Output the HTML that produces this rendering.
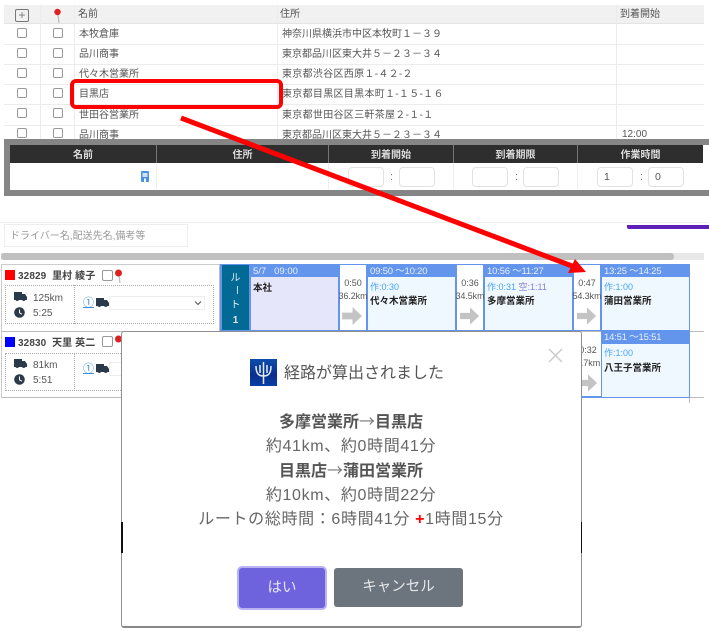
<!DOCTYPE html>
<html lang="ja"><head><meta charset="utf-8">
<style>
html,body{margin:0;padding:0;background:#fff}
#p{position:relative;width:709px;height:631px;overflow:hidden;background:#fff;font-family:"Liberation Sans","Noto Sans CJK JP",sans-serif;color:#555;filter:blur(.35px)}
#p div{position:absolute;box-sizing:border-box}
.t{font-size:10px;line-height:14px;white-space:nowrap;color:#555}
.cb{width:10px;height:10px;border:1px solid #999;border-radius:2px;background:#fff}
.th{font-size:10px;font-weight:bold;color:#ddd;text-align:center;line-height:18px;top:147px;height:18px;white-space:nowrap}
.inp{width:36px;height:20px;top:167px;border:1px solid #e2e2e2;border-radius:4px;background:#fff;font-size:10.5px;line-height:18px;padding-left:6px;color:#555}
.col{top:167px;font-size:11px;color:#777;line-height:20px}
.sh{color:#e8f0ff;font-size:9.5px;line-height:14px;padding-left:3px;white-space:nowrap;letter-spacing:-.2px}
.sb{background:#f0f8ff}
.wk{font-size:9px;color:#4aa3f5;line-height:12px;white-space:nowrap}
.nm{font-size:9.5px;font-weight:bold;color:#222;line-height:12px;white-space:nowrap}
.mv{background:#fff;font-size:9px;color:#555;text-align:center;line-height:13px;white-space:nowrap;padding-top:12px}
.km{font-size:8.8px;margin-left:-5px;margin-right:-5px}
.mt{font-size:16px;line-height:24px;text-align:center;left:122px;width:458px;color:#666;white-space:nowrap;letter-spacing:.65px}
.mb{font-weight:bold;color:#555;letter-spacing:0}
.ar{font-family:"Noto Sans CJK JP",sans-serif;font-weight:normal;color:#777}
.rt{left:222px;width:27px;text-align:center;color:#dfeaf0;font-size:10px;line-height:14px}
</style></head><body>
<div id="p">
<!-- table -->
<div style="left:4px;top:5px;width:700px;height:18px;background:#f1f1f1"></div>
<div style="left:4px;top:23px;width:700px;height:1px;background:#e4e4e4"></div>
<div style="left:4px;top:44px;width:700px;height:1px;background:#ececec"></div>
<div style="left:4px;top:64px;width:700px;height:1px;background:#ececec"></div>
<div style="left:4px;top:84px;width:700px;height:1px;background:#ececec"></div>
<div style="left:4px;top:104px;width:700px;height:1px;background:#ececec"></div>
<div style="left:4px;top:125px;width:700px;height:1px;background:#ececec"></div>
<div style="left:40px;top:5px;width:1px;height:135px;background:#ececec"></div>
<div style="left:74px;top:5px;width:1px;height:135px;background:#ececec"></div>
<div style="left:277px;top:5px;width:1px;height:135px;background:#ececec"></div>
<div style="left:616px;top:5px;width:1px;height:135px;background:#ececec"></div>
<div style="left:15px;top:9px;width:14px;height:13px;border:1px solid #777;border-radius:2px;color:#777;font-size:12px;line-height:10px;text-align:center">+</div>
<svg style="position:absolute;left:53px;top:8px" width="10" height="16" viewBox="0 0 10 16"><path d="M5 7L6 15" stroke="#bbb" stroke-width="1.2"/><circle cx="4.5" cy="4" r="3.2" fill="#e02020"/></svg>
<div class="t" style="left:78px;top:8px">名前</div>
<div class="t" style="left:280px;top:8px">住所</div>
<div class="t" style="left:620px;top:8px">到着開始</div>

<div class="cb" style="left:17px;top:28px"></div><div class="cb" style="left:53px;top:28px"></div>
<div class="t" style="left:79px;top:28px">本牧倉庫</div>
<div class="t" style="left:282px;top:28px">神奈川県横浜市中区本牧町１－３９</div>
<div class="cb" style="left:17px;top:48px"></div><div class="cb" style="left:53px;top:48px"></div>
<div class="t" style="left:79px;top:48px">品川商事</div>
<div class="t" style="left:282px;top:48px">東京都品川区東大井５－２３－３４</div>
<div class="cb" style="left:17px;top:68px"></div><div class="cb" style="left:53px;top:68px"></div>
<div class="t" style="left:79px;top:68px">代々木営業所</div>
<div class="t" style="left:282px;top:68px;letter-spacing:.3px">東京都渋谷区西原１-４２-２</div>
<div class="cb" style="left:17px;top:88px"></div><div class="cb" style="left:53px;top:88px"></div>
<div class="t" style="left:79px;top:88px">目黒店</div>
<div class="t" style="left:282px;top:88px;letter-spacing:.3px">東京都目黒区目黒本町１-１５-１６</div>
<div class="cb" style="left:17px;top:108px"></div><div class="cb" style="left:53px;top:108px"></div>
<div class="t" style="left:79px;top:109px">世田谷営業所</div>
<div class="t" style="left:282px;top:109px;letter-spacing:.3px">東京都世田谷区三軒茶屋２-１-１</div>
<div class="cb" style="left:17px;top:128px"></div><div class="cb" style="left:53px;top:128px"></div>
<div class="t" style="left:79px;top:129px">品川商事</div>
<div class="t" style="left:282px;top:129px">東京都品川区東大井５－２３－３４</div>
<div class="t" style="left:622px;top:128px">12:00</div>

<!-- dark panel -->
<div style="left:4px;top:138.500px;width:705px;height:57px;background:#858585"></div>
<div style="left:10px;top:144.500px;width:693px;height:45px;background:#fff"></div>
<div style="left:703px;top:144.500px;width:6px;height:45px;background:#fff"></div>
<div style="left:10px;top:145px;width:693px;height:18px;background:#2e2e2e"></div>
<div style="left:156px;top:145px;width:1px;height:18px;background:#777"></div>
<div style="left:328px;top:145px;width:1px;height:18px;background:#777"></div>
<div style="left:453px;top:145px;width:1px;height:18px;background:#777"></div>
<div style="left:577px;top:145px;width:1px;height:18px;background:#777"></div>
<div class="th" style="left:10px;width:146px">名前</div>
<div class="th" style="left:157px;width:171px">住所</div>
<div class="th" style="left:329px;width:124px">到着開始</div>
<div class="th" style="left:454px;width:123px">到着期限</div>
<div class="th" style="left:578px;width:125px">作業時間</div>
<div style="left:156px;top:164px;width:1px;height:25px;background:#eee"></div>
<div style="left:328px;top:164px;width:1px;height:25px;background:#eee"></div>
<div style="left:453px;top:164px;width:1px;height:25px;background:#eee"></div>
<div style="left:577px;top:164px;width:1px;height:25px;background:#eee"></div>
<svg style="position:absolute;left:141px;top:171px" width="8" height="11" viewBox="0 0 8 11"><rect width="8" height="11" rx="1" fill="#4a90e2"/><rect x="1.500" y="2" width="5" height="4" fill="#cfe2fa"/><rect x="3" y="7.500" width="2" height="3.500" fill="#fff"/></svg>
<div class="inp" style="left:348px"></div><div class="col" style="left:390px">:</div><div class="inp" style="left:399px"></div>
<div class="inp" style="left:472px"></div><div class="col" style="left:515px">:</div><div class="inp" style="left:523px"></div>
<div class="inp" style="left:597px">1</div><div class="col" style="left:640px">:</div><div class="inp" style="left:648px">0</div>

<div style="left:0;top:222px;width:709px;height:1px;background:#eee"></div>
<div style="left:627px;top:225px;width:82px;height:4px;background:#5b21b6;border-radius:0 0 0 2px"></div>
<div style="left:4px;top:224px;width:184px;height:23px;border:1px solid #eee;font-size:10px;line-height:23px;color:#999;padding-left:5px;white-space:nowrap">ドライバー名,配送先名,備考等</div>

<!-- scrollbar -->
<div style="left:1px;top:253px;width:703px;height:7px;background:#e8e8e8"></div>
<div style="left:1px;top:253px;width:673px;height:7px;background:#c0c0c0;border-radius:3px"></div>

<!-- drivers -->
<div style="left:1px;top:264px;width:218px;height:1px;background:#ccc"></div>
<div style="left:1px;top:331px;width:703px;height:1px;background:#bbb"></div>
<div style="left:1px;top:397px;width:703px;height:1px;background:#bbb"></div>
<div style="left:689px;top:397px;width:1px;height:6px;background:#bbb"></div>
<div style="left:1px;top:264px;width:1px;height:134px;background:#ccc"></div>
<div style="left:219px;top:264px;width:1px;height:67px;background:#bbb"></div>

<div style="left:5px;top:270px;width:10px;height:10px;background:#f00"></div>
<div style="left:18px;top:270px;font-size:10px;font-weight:bold;color:#444;line-height:14px;white-space:nowrap;letter-spacing:.1px">32829&nbsp; 里村 綾子</div>
<div class="cb" style="left:102px;top:270px;width:11px;height:11px"></div>
<svg style="position:absolute;left:114px;top:269px" width="10" height="15" viewBox="0 0 10 15"><path d="M5 7L6 14" stroke="#bbb" stroke-width="1.200"/><circle cx="4.500" cy="4" r="3.500" fill="#e02020"/></svg>
<div style="left:5px;top:285px;width:209px;height:39px;border:1px dotted #aaa"></div>
<div style="left:74px;top:285px;width:1px;height:39px;border-left:1px dotted #aaa"></div>
<svg style="position:absolute;left:14px;top:291px" width="13" height="11" viewBox="0 0 13 11"><path d="M0 1h8v2h3l2 3v3h-1.500a2 2 0 0 1-3.500 0h-3a2 2 0 0 1-3.500 0H0z" fill="#2b3a4a"/></svg>
<svg style="position:absolute;left:14px;top:307px" width="11" height="11" viewBox="0 0 11 11"><circle cx="5.500" cy="5.500" r="5.300" fill="#2b3a4a"/><path d="M5.500 2.500V5.800L8 7.200" stroke="#fff" fill="none"/></svg>
<div class="t" style="left:33px;top:292px">125km</div>
<div class="t" style="left:33px;top:307px">5:25</div>
<div style="left:83px;top:296px;font-size:11px;color:#3d8fdc;text-decoration:underline;line-height:14px">①</div>
<svg style="position:absolute;left:96px;top:297px" width="13" height="11" viewBox="0 0 13 11"><path d="M0 1h8v2h3l2 3v3h-1.500a2 2 0 0 1-3.500 0h-3a2 2 0 0 1-3.500 0H0z" fill="#2b3a4a"/></svg>
<div style="left:109px;top:296px;width:96px;height:14px;border:1px solid #eee;background:#fff"></div>
<svg style="position:absolute;left:194px;top:300px" width="8" height="6" viewBox="0 0 8 6"><path d="M1 1.500L4 4.500L7 1.500" stroke="#555" fill="none" stroke-width="1.100"/></svg>

<div style="left:5px;top:337px;width:10px;height:10px;background:#00f"></div>
<div style="left:18px;top:337px;font-size:10px;font-weight:bold;color:#444;line-height:14px;white-space:nowrap;letter-spacing:.1px">32830&nbsp; 天里 英二</div>
<div class="cb" style="left:102px;top:336px;width:11px;height:11px"></div>
<svg style="position:absolute;left:114px;top:335px" width="10" height="15" viewBox="0 0 10 15"><circle cx="4.500" cy="4" r="3.500" fill="#e02020"/></svg>
<div style="left:5px;top:353px;width:120px;height:38px;border:1px dotted #aaa;border-right:0"></div>
<div style="left:74px;top:353px;width:1px;height:38px;border-left:1px dotted #aaa"></div>
<svg style="position:absolute;left:14px;top:358px" width="13" height="11" viewBox="0 0 13 11"><path d="M0 1h8v2h3l2 3v3h-1.500a2 2 0 0 1-3.500 0h-3a2 2 0 0 1-3.500 0H0z" fill="#2b3a4a"/></svg>
<svg style="position:absolute;left:14px;top:374px" width="11" height="11" viewBox="0 0 11 11"><circle cx="5.500" cy="5.500" r="5.300" fill="#2b3a4a"/><path d="M5.500 2.500V5.800L8 7.200" stroke="#fff" fill="none"/></svg>
<div class="t" style="left:33px;top:359px">81km</div>
<div class="t" style="left:33px;top:374px">5:51</div>
<div style="left:83px;top:362px;font-size:11px;color:#3d8fdc;text-decoration:underline;line-height:14px">①</div>
<svg style="position:absolute;left:96px;top:363px" width="13" height="11" viewBox="0 0 13 11"><path d="M0 1h8v2h3l2 3v3h-1.500a2 2 0 0 1-3.500 0h-3a2 2 0 0 1-3.500 0H0z" fill="#2b3a4a"/></svg>
<div style="left:109px;top:362px;width:14px;height:14px;border:1px solid #eee;background:#fff"></div>

<!-- route row 1 -->
<div style="left:220px;top:264px;width:470px;height:67px;background:#6495ed"></div>
<div style="left:222px;top:265px;width:27px;height:65px;background:#036a96"></div>
<div class="rt" style="top:272px">ル</div>
<div class="rt" style="top:283px;writing-mode:vertical-rl;height:14px;line-height:27px">ー</div>
<div class="rt" style="top:299px">ト</div>
<div class="rt" style="top:314px;font-weight:bold">1</div>
<div class="sh" style="left:250px;top:265px;width:89px;height:12px;letter-spacing:0">5/7&nbsp;&nbsp; 09:00</div>
<div style="left:251px;top:277px;width:87px;height:53px;background:#e6e6fa"></div>
<div class="nm" style="left:253px;top:283px">本社</div>

<div class="mv" style="left:340px;top:265px;width:26px;height:65px">0:50<br><span class="km">36.2km</span></div>
<svg style="position:absolute;left:342px;top:307px" width="21" height="18" viewBox="0 0 22 19"><path d="M0 6h11V0l10 9.500L11 19v-6H0z" fill="#c4c4c4"/></svg>

<div class="sh" style="left:367px;top:265px;width:89px;height:12px">09:50 ～10:20</div>
<div class="sb" style="left:368px;top:277px;width:86.500px;height:52.500px"></div>
<div class="wk" style="left:370px;top:281px">作:0:30</div>
<div class="nm" style="left:370px;top:296px">代々木営業所</div>

<div class="mv" style="left:457px;top:265px;width:26px;height:65px">0:36<br><span class="km">34.5km</span></div>
<svg style="position:absolute;left:460px;top:307px" width="20" height="18" viewBox="0 0 22 19"><path d="M0 6h11V0l10 9.500L11 19v-6H0z" fill="#c4c4c4"/></svg>

<div class="sh" style="left:484px;top:265px;width:89px;height:12px">10:56 ～11:27</div>
<div class="sb" style="left:485px;top:277px;width:86.500px;height:52.500px"></div>
<div class="wk" style="left:487px;top:281px">作:0:31 <span style="color:#8a7fd8">空:1:11</span></div>
<div class="nm" style="left:487px;top:296px">多摩営業所</div>

<div class="mv" style="left:574px;top:265px;width:26px;height:65px">0:47<br><span class="km">54.3km</span></div>
<svg style="position:absolute;left:577px;top:307px" width="20" height="18" viewBox="0 0 22 19"><path d="M0 6h11V0l10 9.500L11 19v-6H0z" fill="#c4c4c4"/></svg>

<div class="sh" style="left:601px;top:265px;width:89px;height:12px">13:25 ～14:25</div>
<div class="sb" style="left:602px;top:277px;width:86.500px;height:52.500px"></div>
<div class="wk" style="left:604px;top:281px">作:1:00</div>
<div class="nm" style="left:604px;top:296px">蒲田営業所</div>

<!-- route row 2 right -->
<div style="left:575px;top:396px;width:115px;height:1.500px;background:#6495ed"></div>
<div class="mv" style="left:575px;top:332px;width:26px;height:64px">0:32<br>1.7km</div>
<svg style="position:absolute;left:578px;top:374px" width="20" height="18" viewBox="0 0 22 19"><path d="M0 6h11V0l10 9.500L11 19v-6H0z" fill="#c4c4c4"/></svg>
<div style="left:601px;top:331px;width:89px;height:67px;background:#6495ed"></div>
<div class="sh" style="left:601px;top:331px;width:89px;height:13px">14:51 ～15:51</div>
<div class="sb" style="left:602px;top:344px;width:86.500px;height:52.500px"></div>
<div class="wk" style="left:604px;top:347px">作:1:00</div>
<div class="nm" style="left:604px;top:363px">八王子営業所</div>

<!-- modal -->
<div style="left:121px;top:331px;width:461px;height:297px;background:#fff;border:1.500px solid #8f8f8f;border-bottom:2px solid #888;border-radius:3px"></div>
<div style="left:121px;top:522px;width:1.500px;height:31px;background:#111"></div>
<div style="left:580.500px;top:522px;width:1.500px;height:31px;background:#111"></div>
<svg style="position:absolute;left:250px;top:359px" width="27" height="27" viewBox="0 0 27 27"><defs><linearGradient id="g" x1="0" y1="0" x2="0" y2="1"><stop offset="0" stop-color="#0d4cab"/><stop offset=".6" stop-color="#0a2f8c"/><stop offset="1" stop-color="#0a3fa8"/></linearGradient></defs><rect width="27" height="27" fill="url(#g)"/><path d="M13.500 3V25M6 7c0 8 3 10 7.500 10s7.500-2 7.500-10M10 6v8M17 6v8" stroke="#e4ecf8" stroke-width="1.500" fill="none"/></svg>
<div style="left:284px;top:362px;font-size:16px;line-height:24px;color:#555;white-space:nowrap">経路が算出されました</div>
<svg style="position:absolute;left:548px;top:348px" width="15" height="15" viewBox="0 0 15 15"><path d="M1 1L14 14M14 1L1 14" stroke="#c8c8c8" stroke-width="1.300"/></svg>
<div class="mt mb" style="top:408px">多摩営業所<span class="ar">→</span>目黒店</div>
<div class="mt" style="top:435px">約41km、約0時間41分</div>
<div class="mt mb" style="top:457px">目黒店<span class="ar">→</span>蒲田営業所</div>
<div class="mt" style="top:484px">約10km、約0時間22分</div>
<div class="mt" style="top:508px">ルートの総時間：6時間41分 <b style="color:#f00">+</b>1時間15分</div>
<div style="left:237px;top:566px;width:90px;height:44px;background:#6e63dd;border:2px solid #b9b3f2;border-radius:5px;color:#e8e6fb;font-size:14.500px;text-align:center;line-height:40px">はい</div>
<div style="left:334px;top:568px;width:129px;height:39px;background:#6c757d;border-radius:3px;color:#e6e8ea;font-size:14.500px;text-align:center;line-height:39px">キャンセル</div>

<!-- red annotations -->
<div style="left:70px;top:79px;width:213px;height:30px;border:4px solid #f00;border-radius:6px"></div>
<svg style="position:absolute;left:0;top:0" width="709" height="631" viewBox="0 0 709 631"><path d="M181 118L572 266" stroke="#f00" stroke-width="5" fill="none"/><path d="M575 259L586 272L568 273Z" fill="#f00"/></svg>
</div>
</body></html>
